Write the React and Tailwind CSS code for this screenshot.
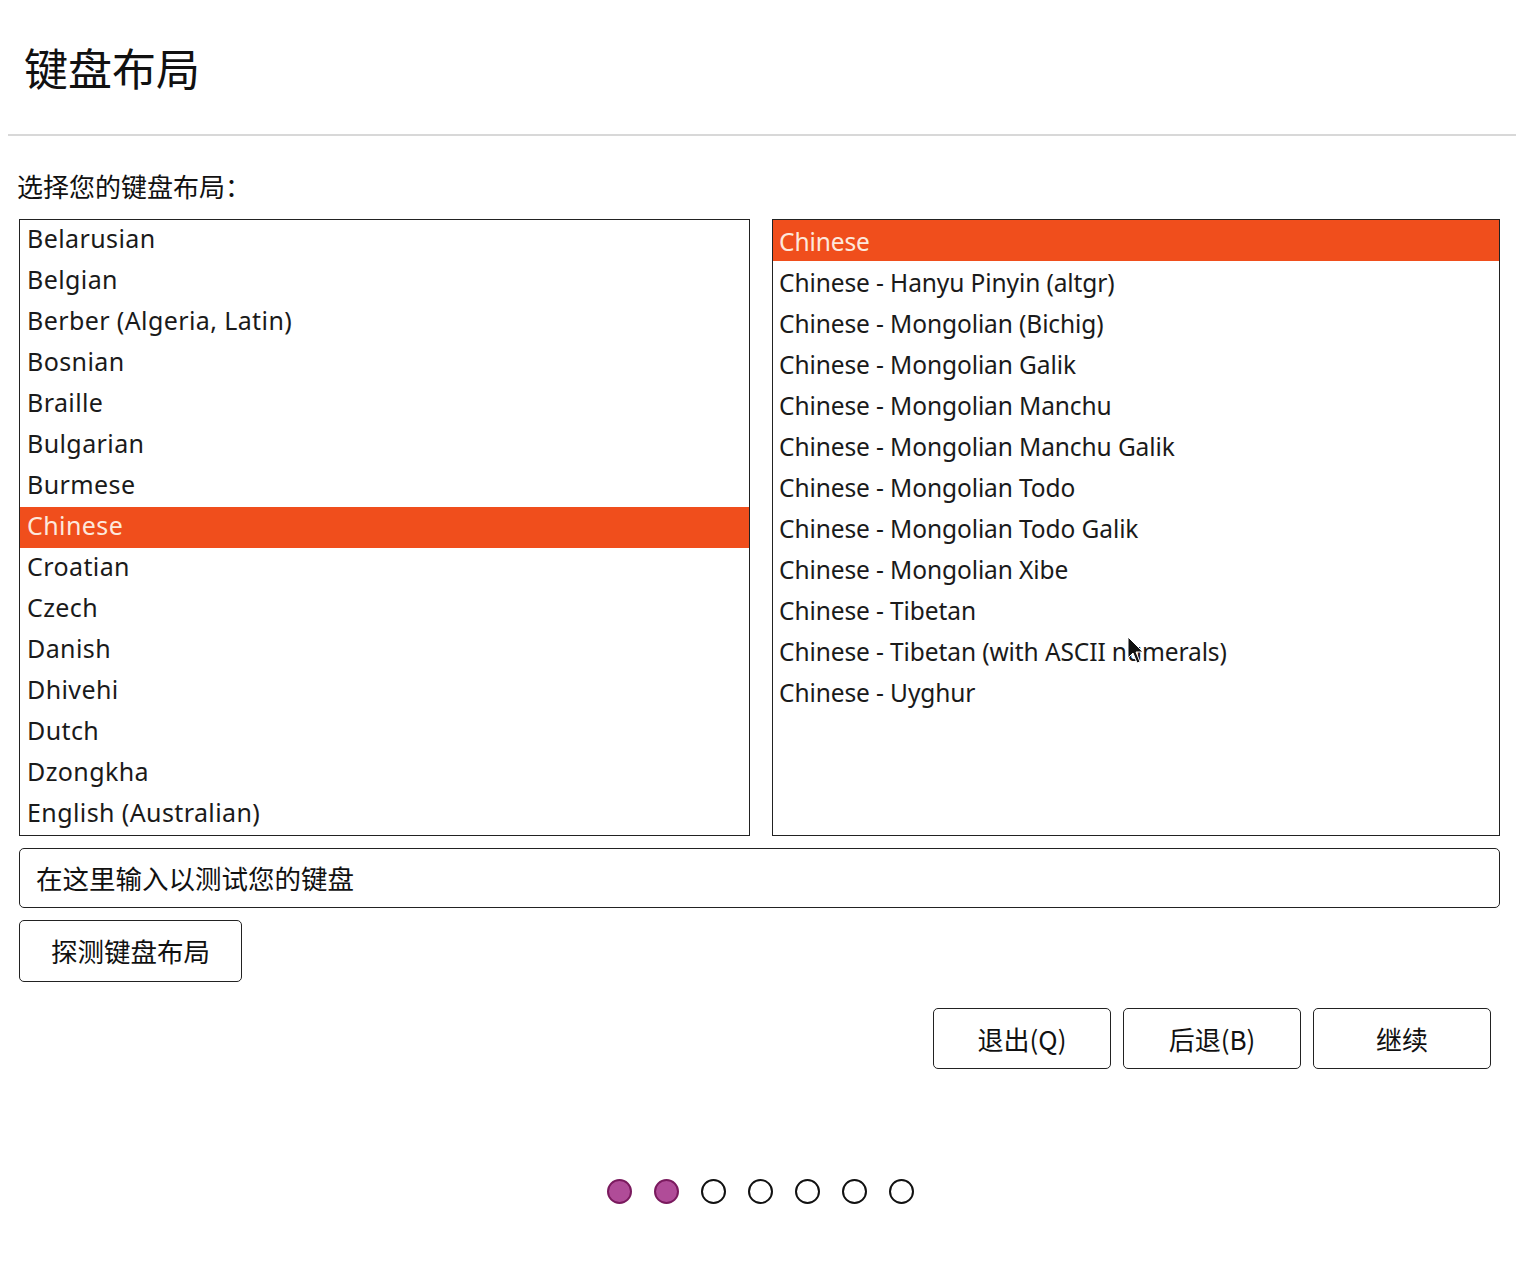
import React from "react";

const left = [
  "Belarusian",
  "Belgian",
  "Berber (Algeria, Latin)",
  "Bosnian",
  "Braille",
  "Bulgarian",
  "Burmese",
  "Chinese",
  "Croatian",
  "Czech",
  "Danish",
  "Dhivehi",
  "Dutch",
  "Dzongkha",
  "English (Australian)",
];

const right = [
  "Chinese",
  "Chinese - Hanyu Pinyin (altgr)",
  "Chinese - Mongolian (Bichig)",
  "Chinese - Mongolian Galik",
  "Chinese - Mongolian Manchu",
  "Chinese - Mongolian Manchu Galik",
  "Chinese - Mongolian Todo",
  "Chinese - Mongolian Todo Galik",
  "Chinese - Mongolian Xibe",
  "Chinese - Tibetan",
  "Chinese - Tibetan (with ASCII numerals)",
  "Chinese - Uyghur",
];

const latin = { fontFamily: '"Noto Sans", "Open Sans", sans-serif' };
const cjk = { fontFamily: '"Noto Sans CJK SC", "Noto Sans", sans-serif' };

function Row({ text, selected, pad, size }) {
  return (
    <div
      className={
        "h-[41px] flex items-center whitespace-nowrap " +
        size +
        " " +
        pad +
        (selected ? " bg-[#f04e1c] text-[#fde8dc]" : " text-[#1a1a1a]")
      }
      style={latin}
    >
      {text}
    </div>
  );
}

export default function App() {
  return (
    <div className="w-[1524px] h-[1280px] bg-white relative overflow-hidden">
      <div className="pt-[38px] pl-[24px] h-[134px]">
        <div className="text-[44px] leading-[58px] text-[#111]" style={cjk}>
          键盘布局
        </div>
      </div>
      <div className="mx-[8px] h-[2px] bg-[#d8d8d8]" />
      <div className="pl-[17px] pt-[34px] text-[26px] leading-[32px] text-[#111]" style={cjk}>
        选择您的键盘布局：
      </div>
      <div className="flex pl-[19px] pt-[17px] gap-[22px]">
        <div className="w-[731px] h-[617px] border-[1.5px] border-[#222] overflow-hidden">
          {left.map((t) => (
            <Row
              key={t}
              text={t}
              selected={t === "Chinese"}
              pad="pl-[7px] tracking-[0.4px] pb-[4px]"
              size="text-[25px]"
            />
          ))}
        </div>
        <div className="w-[728px] h-[617px] border-[1.5px] border-[#222] overflow-hidden">
          {right.map((t, i) => (
            <Row
              key={t}
              text={t}
              selected={i === 0}
              pad="pl-[6px] tracking-[-0.1px] pt-[3px]"
              size="text-[24.5px]"
            />
          ))}
        </div>
      </div>
      <div className="pl-[19px] pt-[12px]">
        <div
          className="w-[1481px] h-[60px] border-[1.5px] border-[#222] rounded-[5px] flex items-center pl-[16px] text-[26.5px] text-[#111]"
          style={cjk}
        >
          在这里输入以测试您的键盘
        </div>
      </div>
      <div className="pl-[19px] pt-[12px]">
        <div
          className="w-[223px] h-[62px] border-[1.5px] border-[#222] rounded-[5px] flex items-center justify-center text-[26.5px] text-[#111]"
          style={cjk}
        >
          探测键盘布局
        </div>
      </div>
      <div className="flex justify-end pr-[33px] pt-[26px] gap-[12px]">
        {["退出(Q)", "后退(B)", "继续"].map((t) => (
          <div
            key={t}
            className="w-[178px] h-[61px] border-[1.5px] border-[#222] rounded-[5px] flex items-center justify-center text-[26px] text-[#111]"
            style={cjk}
          >
            {t}
          </div>
        ))}
      </div>
      <div className="flex justify-center pt-[110px]">
        <div className="flex gap-[22px] ml-[-4px]">
          {[0, 1, 2, 3, 4, 5, 6].map((i) => (
            <div
              key={i}
              className={
                "w-[25px] h-[25px] rounded-full border-[2.5px] " +
                (i < 2 ? "bg-[#b04c98] border-[#7a1a5e]" : "bg-white border-[#111]")
              }
            />
          ))}
        </div>
      </div>
      <svg className="absolute left-[1127px] top-[636px]" width="20" height="30" viewBox="0 0 20 30">
        <path d="M1 1 L1 22 L6 17 L10 27 L13 26 L9 16 L16 16 Z" fill="#111" stroke="#fff" strokeWidth="1" />
      </svg>
    </div>
  );
}
